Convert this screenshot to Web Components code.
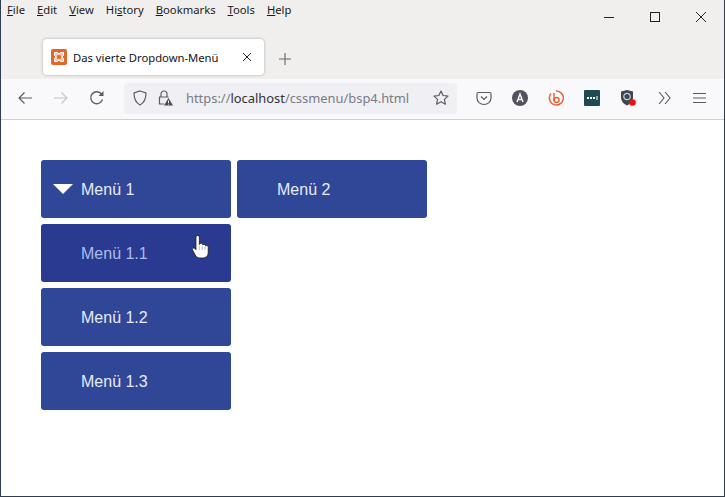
<!DOCTYPE html>
<html lang="de">
<head>
<meta charset="utf-8">
<title>Das vierte Dropdown-Menü</title>
<style>
  html, body { margin: 0; height: 100%; overflow: hidden; background: #fff; }
  body { font-family: "Noto Sans", sans-serif; }
</style>
</head>
<body>
<browser-window>
  <dropdown-menu>
    <menu-column>
      <menu-button open>Menü 1</menu-button>
      <menu-button hover cursor>Menü 1.1</menu-button>
      <menu-button>Menü 1.2</menu-button>
      <menu-button>Menü 1.3</menu-button>
    </menu-column>
    <menu-column>
      <menu-button>Menü 2</menu-button>
    </menu-column>
  </dropdown-menu>
</browser-window>

<script>
// Fensterrahmen mit Menüleiste, Tab-Leiste und Toolbar
const windowTemplate = document.createElement('template');
windowTemplate.innerHTML = `
  <style>
    :host {
      display: flex;
      flex-direction: column;
      box-sizing: border-box;
      height: 497px;
      border: solid #2c3e50;
      border-width: 0 1px 1px 1px;
      background: #fff;
    }
    svg { display: block; flex: none; }
    .frame { background: #f0efee; height: 79px; display: flex; flex-direction: column; }
    .top { display: flex; justify-content: space-between; height: 38px; }
    .menubar {
      display: flex;
      gap: 12px;
      padding: 1px 0 0 6px;
      font: 11.25px/18px "Noto Sans", sans-serif;
      color: #1a1a1a;
    }
    .menubar u { text-decoration-thickness: 1px; text-underline-offset: 1px; }
    .winbtns { display: flex; gap: 23px; padding: 11px 17px 0 0; }
    .tabs { display: flex; align-items: center; gap: 15px; padding-left: 42px; height: 41px; }
    .tab {
      box-sizing: border-box;
      width: 221px;
      height: 36px;
      margin-top: -3px;
      background: #fff;
      border-radius: 4px;
      box-shadow: 0 0 3px rgba(0,0,0,.3);
      display: flex;
      align-items: center;
      padding: 0 12px 0 8px;
      font: 11.25px "Noto Sans", sans-serif;
      color: #15141a;
      gap: 6px;
    }
    .tab span { flex: 1; white-space: nowrap; }
    .toolbar {
      box-sizing: border-box;
      height: 41px;
      background: #f9f9fb;
      border-bottom: 1px solid #cfcfd8;
      display: flex;
      align-items: center;
      padding: 0 0 2px 16px;
    }
    .nav { display: flex; align-items: center; gap: 20px; }
    .url {
      box-sizing: border-box;
      width: 333px;
      height: 31px;
      margin-left: 19px;
      background: #f0f0f4;
      border-radius: 4px;
      display: flex;
      align-items: center;
      padding: 0 8px;
      font: 12.9px "Noto Sans", sans-serif;
      color: #7b7b84;
    }
    .url .shield { margin-right: 9px; }
    .url .addr { margin-left: 13px; flex: 1; white-space: nowrap; }
    .url b { font-weight: 400; color: #30303a; }
    .tools { display: flex; align-items: center; gap: 20px; margin-left: 19px; }
    .tools .menu { margin-left: 1px; }
    .page { flex: 1; padding: 40px; }
  </style>
  <div class="frame">
    <div class="top">
      <div class="menubar">
        <span><u>F</u>ile</span><span><u>E</u>dit</span><span><u>V</u>iew</span><span>Hi<u>s</u>tory</span><span><u>B</u>ookmarks</span><span><u>T</u>ools</span><span><u>H</u>elp</span>
      </div>
      <div class="winbtns">
        <svg width="12" height="12" viewBox="0 0 12 12"><path d="M1 6.500h10" stroke="#222" fill="none"/></svg>
        <svg width="12" height="12" viewBox="0 0 12 12" style="margin-left:11px"><rect x="1.500" y="1.500" width="9" height="9" stroke="#222" fill="none"/></svg>
        <svg width="12" height="12" viewBox="0 0 12 12" style="margin-left:11px"><path d="M1 1l10 10M11 1L1 11" stroke="#222" fill="none"/></svg>
      </div>
    </div>
    <div class="tabs">
      <div class="tab">
        <svg width="16" height="16" viewBox="0 0 16 16"><rect width="16" height="16" rx="2" fill="#e0672c"/><path d="M3.500 3.500h3L8 5l1.500-1.500h3v3L11 8l1.500 1.500v3h-3L8 11l-1.500 1.500h-3v-3L5 8 3.500 6.500z" fill="#f6c9ae"/><path d="M6.200 6.200h3.600v3.600H6.200z" fill="#e0672c"/><path d="M3.500 3.500h3L8 5l1.500-1.500h3v3L11 8l1.500 1.500v3h-3L8 11l-1.500 1.500h-3v-3L5 8 3.500 6.500z" fill="none" stroke="#fff" stroke-width="1"/></svg>
        <span>Das vierte Dropdown-Menü</span>
        <svg width="10" height="10" viewBox="0 0 10 10"><path d="M1 1l8 8M9 1L1 9" stroke="#222" stroke-width="1" fill="none"/></svg>
      </div>
      <svg width="12" height="12" viewBox="0 0 12 12"><path d="M6 0v12M0 6h12" stroke="#666" stroke-width="1.100" fill="none"/></svg>
    </div>
  </div>
  <div class="toolbar">
    <div class="nav">
      <svg width="16" height="14" viewBox="0 0 16 14"><path d="M15 7H2M7.500 1.500L2 7l5.500 5.500" stroke="#5b5b66" stroke-width="1.200" fill="none"/></svg>
      <svg width="16" height="14" viewBox="0 0 16 14"><path d="M1 7h13M8.500 1.500L14 7l-5.500 5.500" stroke="#c6c6cc" stroke-width="1.200" fill="none"/></svg>
      <svg width="16" height="16" viewBox="0 0 16 16"><path d="M13.500 9.500A6 6 0 1 1 12 3.500l1.500 1.500" stroke="#5b5b66" stroke-width="1.300" fill="none"/><path d="M14.500 1v5h-5z" fill="#5b5b66"/></svg>
    </div>
    <div class="url">
      <svg class="shield" width="16" height="16" viewBox="0 0 16 16"><path d="M8 1l6 2c0 6-1.500 9.500-6 12C3.500 12.500 2 9 2 3z" stroke="#5b5b66" stroke-width="1.200" fill="none"/></svg>
      <svg width="16" height="16" viewBox="0 0 16 16"><path d="M4 7V4a3 3 0 0 1 6 0v3M7 14H2.500V7h9" stroke="#5b5b66" stroke-width="1.200" fill="none"/><path d="M11.500 8l4.500 7.500H7z" fill="#4a4a55"/><path d="M11.500 10.500v2.500M11.500 13.800v.7" stroke="#fff"/></svg>
      <span class="addr">https://<b>localhost</b>/cssmenu/bsp4.html</span>
      <svg width="16" height="16" viewBox="0 0 16 16"><path d="M8 1l2.100 4.500 4.900.6-3.600 3.300 1 4.800L8 11.800l-4.400 2.400 1-4.800L1 6.100l4.900-.6z" stroke="#5b5b66" stroke-width="1.200" fill="none" stroke-linejoin="round"/></svg>
    </div>
    <div class="tools">
      <svg width="16" height="16" viewBox="0 0 16 16"><path d="M2.500 2.500h11a1.500 1.500 0 0 1 1.500 1.500v4a7 6.500 0 0 1-14 0V4a1.500 1.500 0 0 1 1.500-1.500z" stroke="#5b5b66" stroke-width="1.200" fill="none"/><path d="M5 6.500L8 9.500l3-3" stroke="#5b5b66" stroke-width="1.200" fill="none"/></svg>
      <svg width="16" height="16" viewBox="0 0 16 16"><circle cx="8" cy="8" r="8" fill="#55525f"/><path d="M5 12l3-8 3 8M6.200 9.500h3.600" stroke="#fff" stroke-width="1.400" fill="none"/></svg>
      <svg width="16" height="16" viewBox="0 0 16 16"><path d="M3 3.500A7 7 0 1 0 8 1" stroke="#e8643a" stroke-width="1.500" fill="none"/><path d="M6 3v8" stroke="#e8643a" stroke-width="1.500"/><circle cx="8.500" cy="10" r="2.500" stroke="#e8643a" stroke-width="1.500" fill="none"/></svg>
      <svg width="16" height="16" viewBox="0 0 16 16"><rect width="16" height="16" rx="1" fill="#1f4a52"/><path d="M3 7h2v2H3zM6 7h2v2H6zM9 7h2v2H9z" fill="#fff"/><path d="M13 6v4" stroke="#fff"/></svg>
      <svg width="18" height="16" viewBox="0 0 18 16"><path d="M1 1.500L7 0l6 1.500V7c0 4-2.500 7-6 8.500C3.500 14 1 11 1 7z" fill="#3c4654"/><circle cx="7" cy="6.500" r="3.200" stroke="#c8d0da" stroke-width="1.200" fill="none"/><circle cx="12.500" cy="12.500" r="3.300" fill="#f01010"/></svg>
      <svg width="14" height="12" viewBox="0 0 14 12"><path d="M1 0l5 6-5 6M7 0l5 6-5 6" stroke="#5b5b66" stroke-width="1.100" fill="none"/></svg>
      <svg class="menu" width="13" height="12" viewBox="0 0 13 12"><path d="M0 1.500h13M0 6h13M0 10.500h13" stroke="#5b5b66" stroke-width="1.200" fill="none"/></svg>
    </div>
  </div>
  <div class="page"><slot></slot></div>
`;

class BrowserWindow extends HTMLElement {
  constructor() {
    super();
    this.attachShadow({ mode: 'open' });
    this.shadowRoot.appendChild(windowTemplate.content.cloneNode(true));
  }
}

class DropdownMenu extends HTMLElement {
  constructor() {
    super();
    this.attachShadow({ mode: 'open' }).innerHTML = `
      <style>:host { display: flex; gap: 6px; align-items: flex-start; }</style>
      <slot></slot>
    `;
  }
}

class MenuColumn extends HTMLElement {
  constructor() {
    super();
    this.attachShadow({ mode: 'open' }).innerHTML = `
      <style>:host { display: flex; flex-direction: column; gap: 6px; width: 190px; }</style>
      <slot></slot>
    `;
  }
}

class MenuButton extends HTMLElement {
  constructor() {
    super();
    const arrow = this.hasAttribute('open')
      ? '<svg class="arrow" width="20" height="10" viewBox="0 0 20 10"><path d="M0 0h20L10 10z" fill="#fff"/></svg>'
      : '';
    const cursor = this.hasAttribute('cursor')
      ? `<svg class="cursor" width="17" height="24" viewBox="0 0 15 24" preserveAspectRatio="none">
           <path d="M3.500 2a1.500 1.500 0 0 1 3 0V9.500l.4-.6a1.400 1.400 0 0 1 2.500.5l.2.600a1.300 1.300 0 0 1 2.400.6l.1.500a1.200 1.200 0 0 1 2.200.7V17c0 3.500-1.700 6-4.700 6H7c-2 0-3.200-1-4.200-3L.5 15c-.7-1.500 1.200-2.700 2.200-1.300l.8 1.100z" fill="#fff" stroke="#111" stroke-width=".7"/>
           <path d="M6.500 11v4M9 11v4M11.500 11.500v3.500" stroke="#888" stroke-width=".5"/>
         </svg>`
      : '';
    this.attachShadow({ mode: 'open' }).innerHTML = `
      <style>
        :host {
          display: flex;
          position: relative;
          align-items: center;
          box-sizing: border-box;
          height: 58px;
          padding: 2px 0 0 40px;
          background: #304696;
          border-radius: 3px;
          font: 16px "Liberation Sans", Arial, sans-serif;
          color: #e6ecfa;
        }
        :host([hover]) { background: #2a3a90; color: #a9bdea; }
        .arrow { position: absolute; left: 12px; top: 24px; }
        .cursor { position: absolute; left: 151px; top: 11px; }
      </style>
      ${arrow}<slot></slot>${cursor}
    `;
  }
}

customElements.define('browser-window', BrowserWindow);
customElements.define('dropdown-menu', DropdownMenu);
customElements.define('menu-column', MenuColumn);
customElements.define('menu-button', MenuButton);
</script>
</body>
</html>
